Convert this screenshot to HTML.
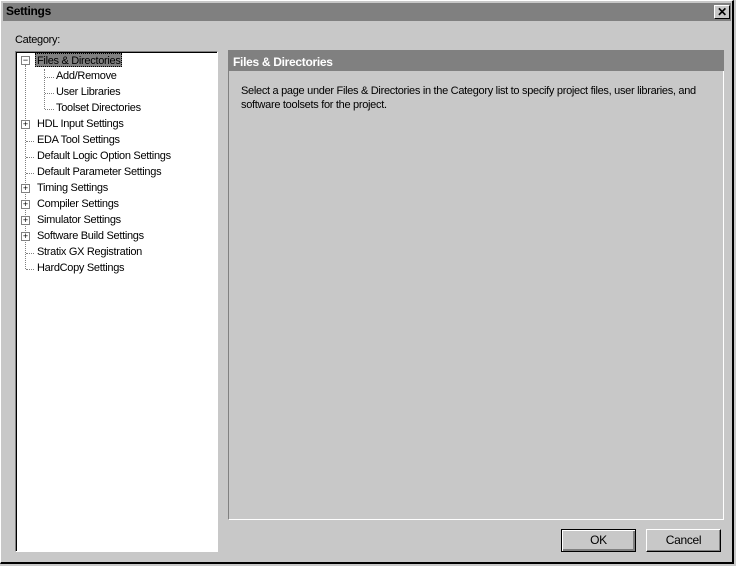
<!DOCTYPE html>
<html><head><style>
body{margin:0;width:736px;height:566px;background:#c8c8c8;font-family:"Liberation Sans",sans-serif;font-size:11px;letter-spacing:-0.3px;position:relative;overflow:hidden}
.a{position:absolute}
#win{left:0;top:0;width:734px;height:564px;border-right:2px solid #000;border-bottom:2px solid #000;border-top:1px solid #fff;border-left:1px solid #fff;box-sizing:border-box}
.t{white-space:nowrap;color:#000}
.btn{background:#c8c8c8;border:1px solid;border-color:#fff #000 #000 #fff;box-shadow:inset -1px -1px 0 #808080;text-align:center;line-height:20px;font-size:12px;box-sizing:border-box}
.dv{border-left:1px dotted #808080}
.dh{border-top:1px dotted #808080}
.pm{width:7px;height:7px;border:1px solid #808080;background:#fff;font-size:9px;line-height:7px;text-align:center;letter-spacing:0}
</style></head><body>
<div class="a" id="win"></div>
<div class="a" style="left:3px;top:3px;width:728px;height:18px;background:#808080"></div>
<div class="a t" style="left:6px;top:4px;font-weight:bold;font-size:12px">Settings</div>
<div class="a" style="left:714px;top:5px;width:16px;height:14px;background:#c8c8c8;border:1px solid;border-color:#fff #000 #000 #fff;box-sizing:border-box;text-align:center;font-weight:bold;font-size:12px;line-height:12px">✕</div>
<div class="a t" style="left:15px;top:34px">Category:</div>
<div class="a" style="left:15px;top:51px;width:203px;height:501px;background:#fff;border:1px solid;border-color:#808080 #fff #fff #808080;box-sizing:border-box;box-shadow:inset 1px 1px 0 #000"></div>
<div class="a dv" style="left:25px;top:65px;height:172px"></div>
<div class="a dv" style="left:44px;top:69px;height:40px"></div>
<div class="a dh" style="left:45px;top:77px;width:9px"></div>
<div class="a dh" style="left:45px;top:93px;width:9px"></div>
<div class="a dh" style="left:45px;top:109px;width:9px"></div>
<div class="a" style="left:35px;top:53px;width:87px;height:14px;background:#808080;border:1px dotted #000;box-sizing:border-box"></div>
<div class="a t" style="left:37px;top:54px;line-height:14px">Files &amp; Directories</div>
<div class="a t" style="left:56px;top:70px">Add/Remove</div>
<div class="a t" style="left:56px;top:86px">User Libraries</div>
<div class="a t" style="left:56px;top:102px">Toolset Directories</div>
<div class="a t" style="left:37px;top:118px">HDL Input Settings</div>
<div class="a t" style="left:37px;top:134px">EDA Tool Settings</div>
<div class="a t" style="left:37px;top:150px">Default Logic Option Settings</div>
<div class="a t" style="left:37px;top:166px">Default Parameter Settings</div>
<div class="a t" style="left:37px;top:182px">Timing Settings</div>
<div class="a t" style="left:37px;top:198px">Compiler Settings</div>
<div class="a t" style="left:37px;top:214px">Simulator Settings</div>
<div class="a t" style="left:37px;top:230px">Software Build Settings</div>
<div class="a t" style="left:37px;top:246px">Stratix GX Registration</div>
<div class="a t" style="left:37px;top:262px">HardCopy Settings</div>
<div class="a dv" style="left:25px;top:237px;height:32px"></div>
<div class="a dh" style="left:26px;top:141px;width:8px"></div>
<div class="a dh" style="left:26px;top:157px;width:8px"></div>
<div class="a dh" style="left:26px;top:173px;width:8px"></div>
<div class="a dh" style="left:26px;top:253px;width:8px"></div>
<div class="a dh" style="left:26px;top:269px;width:8px"></div>
<div class="a pm" style="left:21px;top:56px">−</div>
<div class="a pm" style="left:21px;top:120px">+</div>
<div class="a pm" style="left:21px;top:184px">+</div>
<div class="a pm" style="left:21px;top:200px">+</div>
<div class="a pm" style="left:21px;top:216px">+</div>
<div class="a pm" style="left:21px;top:232px">+</div>
<div class="a" style="left:228px;top:50px;width:496px;height:470px;border:1px solid;border-color:#808080 #fff #fff #808080;box-sizing:border-box"></div>
<div class="a" style="left:228px;top:50px;width:496px;height:21px;background:#808080"></div>
<div class="a t" style="left:233px;top:55px;color:#fff;font-weight:bold;font-size:12px">Files &amp; Directories</div>
<div class="a" style="left:241px;top:84px;width:470px;line-height:14px">Select a page under Files &amp; Directories in the Category list to specify project files, user libraries, and software toolsets for the project.</div>
<div class="a btn" style="left:561px;top:529px;width:75px;height:23px;border:1px solid #000;box-shadow:inset 1px 1px 0 #fff,inset -2px -2px 0 #808080">OK</div>
<div class="a btn" style="left:646px;top:529px;width:75px;height:23px">Cancel</div>
</body></html>
